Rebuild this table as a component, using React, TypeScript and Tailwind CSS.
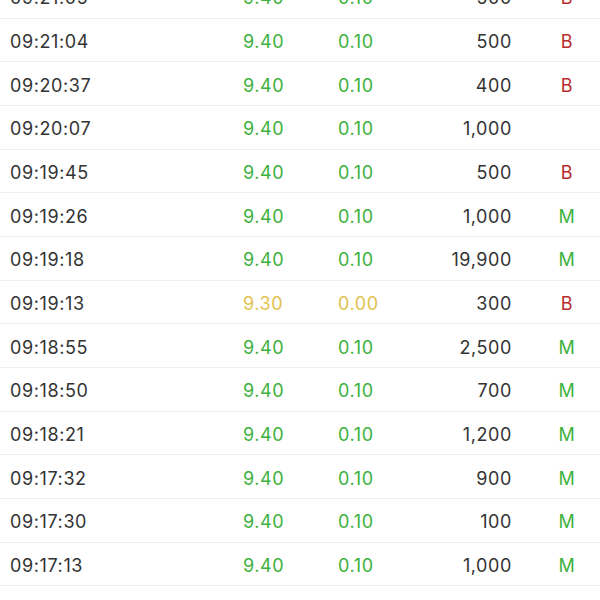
const rows = [
  { t: "09:21:05", p: "9.40", c: "0.10", v: "500", f: "B", tone: "up" },
  { t: "09:21:04", p: "9.40", c: "0.10", v: "500", f: "B", tone: "up" },
  { t: "09:20:37", p: "9.40", c: "0.10", v: "400", f: "B", tone: "up" },
  { t: "09:20:07", p: "9.40", c: "0.10", v: "1,000", f: "", tone: "up" },
  { t: "09:19:45", p: "9.40", c: "0.10", v: "500", f: "B", tone: "up" },
  { t: "09:19:26", p: "9.40", c: "0.10", v: "1,000", f: "M", tone: "up" },
  { t: "09:19:18", p: "9.40", c: "0.10", v: "19,900", f: "M", tone: "up" },
  { t: "09:19:13", p: "9.30", c: "0.00", v: "300", f: "B", tone: "flat" },
  { t: "09:18:55", p: "9.40", c: "0.10", v: "2,500", f: "M", tone: "up" },
  { t: "09:18:50", p: "9.40", c: "0.10", v: "700", f: "M", tone: "up" },
  { t: "09:18:21", p: "9.40", c: "0.10", v: "1,200", f: "M", tone: "up" },
  { t: "09:17:32", p: "9.40", c: "0.10", v: "900", f: "M", tone: "up" },
  { t: "09:17:30", p: "9.40", c: "0.10", v: "100", f: "M", tone: "up" },
  { t: "09:17:13", p: "9.40", c: "0.10", v: "1,000", f: "M", tone: "up" },
  { t: "09:17:05", p: "9.40", c: "0.10", v: "500", f: "M", tone: "up" },
];

export default function App() {
  return (
    <div className="h-[600px] w-[600px] overflow-hidden bg-white font-['Inter',sans-serif] text-[18px] tracking-[0.6px] text-[#333333]">
      <div className="-mt-[25px] flex flex-col">
        {rows.map((r, i) => {
          const tone = r.tone === "up" ? "text-[#3db13d]" : "text-[#e2c250]";
          return (
            <div
              key={i}
              className="flex h-[43.67px] shrink-0 items-center border-b border-[#efefef] pl-[10px] pt-[3px]"
            >
              <span className="w-[233px] shrink-0">{r.t}</span>
              <span className={`w-[95px] shrink-0 ${tone}`}>{r.p}</span>
              <span className={`w-[80px] shrink-0 ${tone}`}>{r.c}</span>
              <span className="w-[94px] shrink-0 text-right">{r.v}</span>
              <span
                className={`w-[110px] shrink-0 text-center ${
                  r.f === "B" ? "text-[#b72d2d]" : "text-[#3db13d]"
                }`}
              >
                {r.f}
              </span>
            </div>
          );
        })}
      </div>
    </div>
  );
}
